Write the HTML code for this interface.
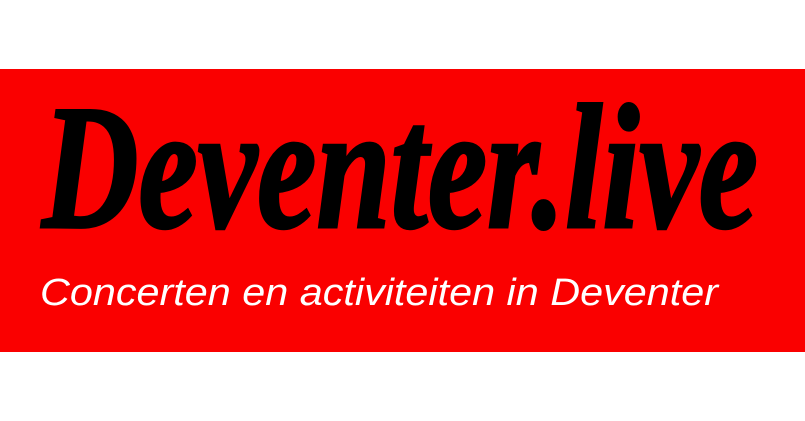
<!DOCTYPE html>
<html><head><meta charset="utf-8"><style>
html,body{margin:0;padding:0;width:805px;height:421px;background:#fff;overflow:hidden}
</style></head><body>
<svg width="805" height="421" viewBox="0 0 805 421" xmlns="http://www.w3.org/2000/svg">
<rect x="0" y="69" width="805" height="283" fill="#fa0000"/>
<text x="42" y="227" font-family="Liberation Serif, serif" font-weight="bold" font-style="italic" font-size="178" fill="#000" stroke="#000" stroke-width="3" textLength="716" lengthAdjust="spacingAndGlyphs">Deventer.live</text>
<text x="40" y="305" font-family="Liberation Sans, sans-serif" font-style="italic" font-size="38" fill="#fff" textLength="678" lengthAdjust="spacingAndGlyphs">Concerten en activiteiten in Deventer</text>
</svg>
</body></html>
